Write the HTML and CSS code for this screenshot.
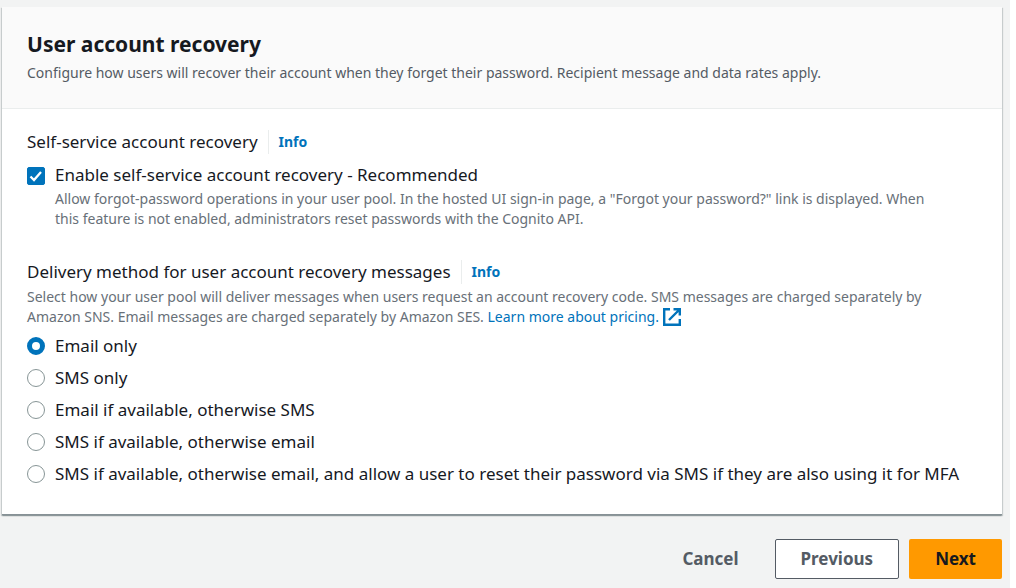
FILE: index.html
```html
<!DOCTYPE html>
<html lang="en">
<head>
<meta charset="utf-8">
<title>User account recovery</title>
<link rel="stylesheet" href="styles.css">
</head>
<body>
<form class="page">
  <section class="card">
    <header class="card-header">
      <h2 class="title">User account recovery</h2>
      <p class="description">Configure how users will recover their account when they forget their password. Recipient message and data rates apply.</p>
    </header>
    <div class="card-body">
      <div class="group">
        <div class="label-row"><h3 class="label">Self-service account recovery</h3><a class="info" href="#">Info</a></div>
        <div class="choice check-choice">
          <input class="check" type="checkbox" id="enable" checked aria-describedby="enable-hint">
          <div>
            <label for="enable">Enable self-service account recovery - Recommended</label>
            <p class="hint check-hint" id="enable-hint">Allow forgot-password operations in your user pool. In the hosted UI sign-in page, a "Forgot your password?" link is displayed. When this feature is not enabled, administrators reset passwords with the Cognito API.</p>
          </div>
        </div>
      </div>
      <div class="group" role="radiogroup" aria-labelledby="delivery">
        <div class="label-row"><h3 class="label" id="delivery">Delivery method for user account recovery messages</h3><a class="info" href="#">Info</a></div>
        <p class="hint">Select how your user pool will deliver messages when users request an account recovery code. SMS messages are charged separately by Amazon SNS. Email messages are charged separately by Amazon SES. <a class="link" href="#">Learn more about pricing. <svg class="external" viewBox="0 0 18 18" aria-hidden="true"><path d="M7 1.2H1.2v15.6h15.6V11M10.5 1.2h6.3v6.3M16.5 1.5L6 12"/></svg></a></p>
        <div class="options">
          <div class="choice"><input class="radio" type="radio" name="delivery" id="r1" checked><label for="r1">Email only</label></div>
          <div class="choice"><input class="radio" type="radio" name="delivery" id="r2"><label for="r2">SMS only</label></div>
          <div class="choice"><input class="radio" type="radio" name="delivery" id="r3"><label for="r3">Email if available, otherwise SMS</label></div>
          <div class="choice"><input class="radio" type="radio" name="delivery" id="r4"><label for="r4">SMS if available, otherwise email</label></div>
          <div class="choice"><input class="radio" type="radio" name="delivery" id="r5"><label for="r5">SMS if available, otherwise email, and allow a user to reset their password via SMS if they are also using it for MFA</label></div>
        </div>
      </div>
    </div>
  </section>
  <div class="actions">
    <button class="button plain" type="button">Cancel</button>
    <button class="button normal" type="button">Previous</button>
    <button class="button primary" type="submit">Next</button>
  </div>
</form>
</body>
</html>
```
FILE: styles.css
```css
* { box-sizing: border-box; }
body { margin: 0; background: #fff; color: #16191f; font: 17px/24px "Noto Sans", sans-serif; }
h2, h3, p { margin: 0; }
.page { min-height: 100vh; margin-right: 6px; padding: 7px 8px 9px 2px; background: #f2f3f3; }
.card { background: #fff; border-bottom: 1px solid #879196; box-shadow: 0 1px 1px rgba(0, 28, 36, .2), 1px 1px 1px rgba(0, 28, 36, .15), -1px 1px 1px rgba(0, 28, 36, .15); }
.card-header { padding: 23px 25px 25px; background: #fafafa; border-bottom: 1px solid #eaeded; }
.title { font-size: 21px; line-height: 28px; font-weight: 700; }
.description { margin-top: 5px; font-size: 14px; line-height: 20px; color: #545b64; }
.hint { margin-top: 3px; font-size: 14px; line-height: 20px; color: #687078; }
.check-hint { margin-top: 2px; padding-right: 32px; }
.card-body { display: flex; flex-direction: column; gap: 31px; padding: 21px 25px 28px; }
.label-row { display: flex; align-items: center; }
.label { font-size: 17px; line-height: 24px; font-weight: 400; }
.info { margin-left: 10px; padding-left: 10px; border-left: 1px solid #eaeded; font-size: 14px; font-weight: 700; color: #0073bb; text-decoration: none; }
.choice { display: flex; align-items: center; gap: 10px; }
.check-choice { align-items: flex-start; margin-top: 9px; }
.check, .radio { appearance: none; flex: none; width: 18px; height: 18px; margin: 0; border: 1px solid #879596; background: #fff; }
.check { margin-top: 4px; border-radius: 2px; }
.check:checked { border-color: #0073bb; background: #0073bb url("data:image/svg+xml,%3Csvg xmlns='http://www.w3.org/2000/svg' viewBox='0 0 16 16'%3E%3Cpath d='M2.5 8.5l3.5 3.5L13 4' fill='none' stroke='white' stroke-width='2.3'/%3E%3C/svg%3E"); }
.radio { border-radius: 50%; }
.radio:checked { border: 5px solid #0073bb; }
.link { color: #0073bb; text-decoration: none; }
.external { width: 18px; height: 18px; vertical-align: -4px; fill: none; stroke: #0073bb; stroke-width: 2.4; }
.options { display: flex; flex-direction: column; gap: 8px; margin-top: 7px; }
.actions { display: flex; justify-content: flex-end; gap: 10px; padding-top: 24px; }
.button { height: 40px; padding: 0 25px; border: 1px solid transparent; border-radius: 2px; background: none; font: 700 17px/24px "Noto Sans", sans-serif; color: #545b64; }
.normal { background: #fff; border-color: #545b64; }
.primary { background: #ff9900; color: #16191f; }
```
